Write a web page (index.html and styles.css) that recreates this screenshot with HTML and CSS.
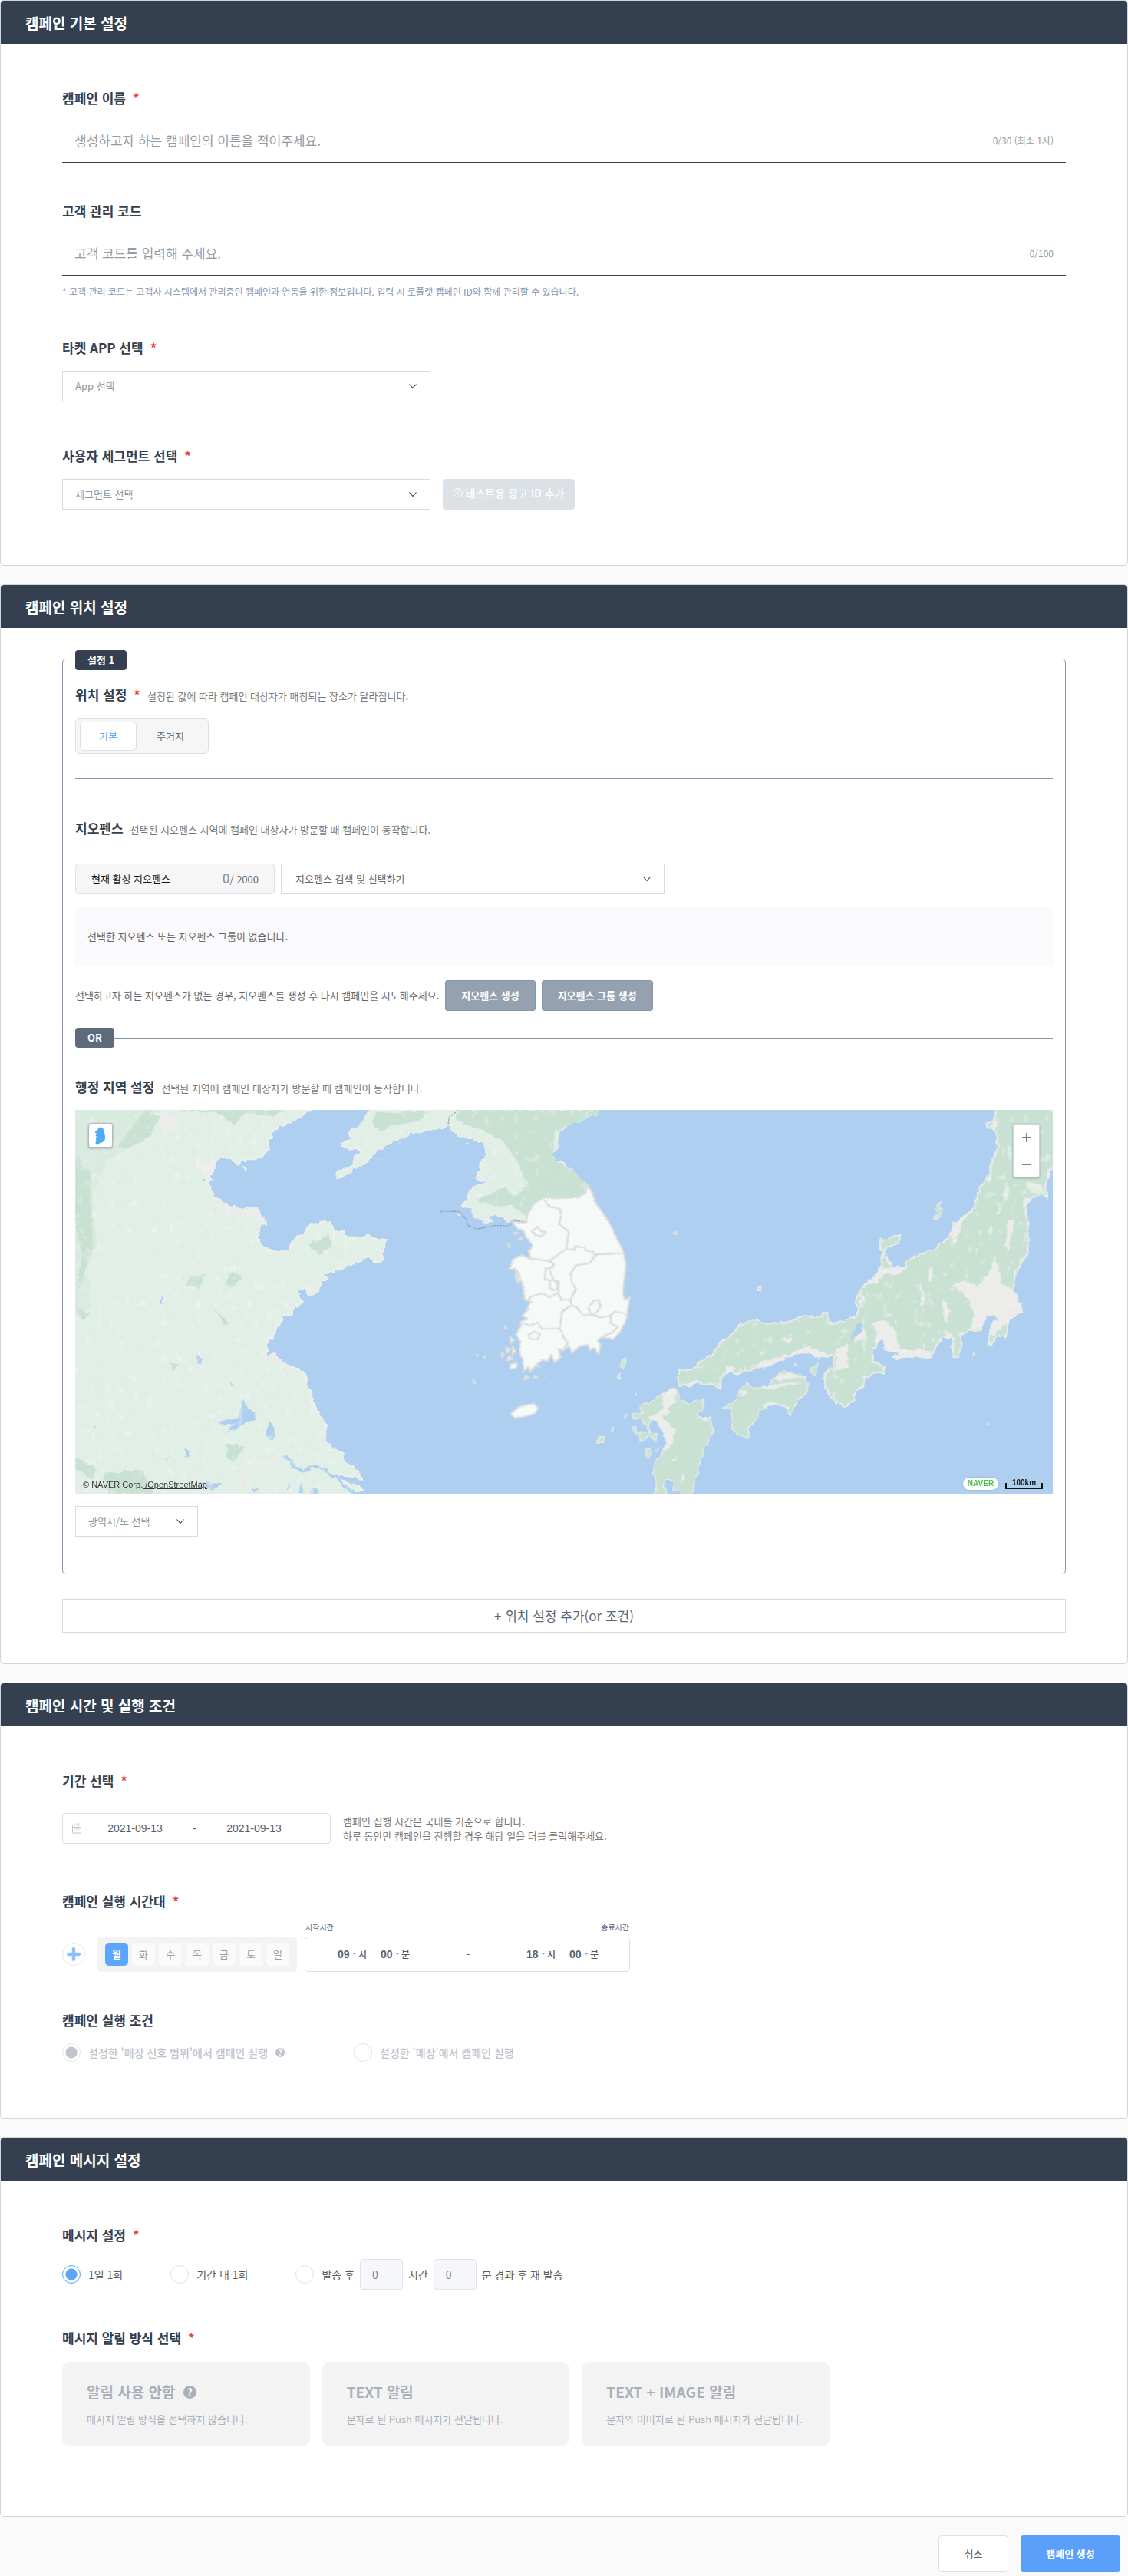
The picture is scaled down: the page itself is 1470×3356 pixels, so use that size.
FILE: index.html
```html
<!DOCTYPE html>
<html lang="ko">
<head>
<meta charset="utf-8">
<meta name="viewport" content="width=device-width, initial-scale=1">
<title>캠페인 생성</title>
<link rel="stylesheet" href="styles.css">
</head>
<body>
<svg class="defs" aria-hidden="true">
  <symbol id="chevron" viewBox="0 0 12 12"><path d="M1.500 3.500 6 8.500l4.500-5" fill="none" stroke="#333" stroke-width="1.100"/></symbol>
</svg>
<form class="page">

  <section class="panel">
    <h2 class="panel-head">캠페인 기본 설정</h2>
    <div class="panel-body basic-body">
      <div class="field">
        <label class="title" for="name">캠페인 이름<span class="star">*</span></label>
        <div class="line-input"><input id="name" type="text" placeholder="생성하고자 하는 캠페인의 이름을 적어주세요."><span class="count">0/30 (최소 1자)</span></div>
      </div>
      <div class="field">
        <label class="title" for="code">고객 관리 코드</label>
        <div class="line-input"><input id="code" type="text" placeholder="고객 코드를 입력해 주세요."><span class="count">0/100</span></div>
        <p class="hint">* 고객 관리 코드는 고객사 시스템에서 관리중인 캠페인과 연동을 위한 정보입니다. 입력 시 로플랫 캠페인 ID와 함께 관리할 수 있습니다.</p>
      </div>
      <div class="field">
        <label class="title" for="app">타켓 APP 선택<span class="star">*</span></label>
        <div class="controls">
          <span class="select select-md"><select id="app"><option>App 선택</option></select><svg class="chev"><use href="#chevron"/></svg></span>
        </div>
      </div>
      <div class="field field-far">
        <label class="title" for="seg">사용자 세그먼트 선택<span class="star">*</span></label>
        <div class="controls">
          <span class="select select-md"><select id="seg"><option>세그먼트 선택</option></select><svg class="chev"><use href="#chevron"/></svg></span>
          <button type="button" class="btn-test" disabled><span class="q-line">?</span>테스트용 광고 ID 추가</button>
        </div>
      </div>
    </div>
  </section>

  <section class="panel">
    <h2 class="panel-head">캠페인 위치 설정</h2>
    <div class="panel-body place-body">
      <div class="rule-box">
        <span class="badge badge-top">설정 1</span>
        <h3 class="title">위치 설정<span class="star">*</span><small>설정된 값에 따라 캠페인 대상자가 매칭되는 장소가 달라집니다.</small></h3>
        <div class="segment">
          <button type="button" class="seg-item seg-on">기본</button>
          <button type="button" class="seg-item">주거지</button>
        </div>
        <hr class="divider">
        <h3 class="title">지오펜스<small>선택된 지오펜스 지역에 캠페인 대상자가 방문할 때 캠페인이 동작합니다.</small></h3>
        <div class="geo-row">
          <div class="geo-count"><span>현재 활성 지오펜스</span><span class="geo-num"><b>0</b>/ 2000</span></div>
          <span class="select select-geo"><select aria-label="지오펜스 검색 및 선택하기"><option>지오펜스 검색 및 선택하기</option></select><svg class="chev"><use href="#chevron"/></svg></span>
        </div>
        <p class="empty">선택한 지오펜스 또는 지오펜스 그룹이 없습니다.</p>
        <div class="make-row">
          <span>선택하고자 하는 지오펜스가 없는 경우, 지오펜스를 생성 후 다시 캠페인을 시도해주세요.</span>
          <button type="button" class="btn-slate">지오펜스 생성</button>
          <button type="button" class="btn-slate">지오펜스 그룹 생성</button>
        </div>
        <div class="or-row"><span class="badge badge-or">OR</span></div>
        <h3 class="title">행정 지역 설정<small>선택된 지역에 캠페인 대상자가 방문할 때 캠페인이 동작합니다.</small></h3>
        <div class="map">
          <svg class="map-art" viewBox="0 0 1274 500" preserveAspectRatio="xMidYMid slice" role="img" aria-label="한국과 주변 지역 지도">
            <defs>
              <filter id="rough" x="-2%" y="-2%" width="104%" height="104%"><feTurbulence type="fractalNoise" baseFrequency="0.13" numOctaves="3" seed="4"/><feDisplacementMap in="SourceGraphic" scale="7" xChannelSelector="R" yChannelSelector="G"/></filter>
              <filter id="speck" x="0" y="0" width="100%" height="100%"><feTurbulence type="fractalNoise" baseFrequency="0.025 0.02" numOctaves="5" seed="8"/><feColorMatrix values="0 0 0 0 0.780  0 0 0 0 0.875  0 0 0 0 0.815  0 0 0 6 -3.400"/></filter>
              <filter id="plain" x="0" y="0" width="100%" height="100%"><feTurbulence type="fractalNoise" baseFrequency="0.05 0.03" numOctaves="4" seed="21"/><feColorMatrix values="0 0 0 0 0.925  0 0 0 0 0.930  0 0 0 0 0.910  0 0 0 8 -5"/></filter>
              <path id="china" d="M20 50H730L715 73 690 90 655 115 620 135 600 160 588 190 592 215 570 245 545 258 515 260 500 277 480 252 455 248 438 262 440 280 425 315 422 345 435 385 460 410 490 425 520 433 557 425 563 450 575 465 588 495 568 490 562 520 562 550 575 575 600 585 640 586 655 560 655 548 695 515 697 497 735 478 757 478 778 515 803 514 806 530 826 538 862 535 870 520 880 540 928 543 918 570 915 600 912 625 895 633 870 612 820 640 790 655 755 670 740 668 757 685 750 698 737 700 733 740 700 757 695 728 675 735 675 750 687 772 660 800 655 820 630 830 620 860 608 875 603 910 588 912 585 963 608 962 630 995 665 1010 692 1032 700 1080 712 1110 715 1140 728 1165 740 1200 752 1220 750 1275 770 1300 803 1325 805 1355 830 1375 850 1395 855 1425 825 1415 790 1405 785 1412 820 1435 850 1445 858 1462 825 1472 800 1500H20Z"/>
              <path id="north" d="M885 50 873 73 862 100 845 125 812 155 818 182 790 192 800 210 830 220 850 222 828 250 830 268 800 290 778 298 780 322 815 308 830 288 862 275 880 245 900 220 935 195 960 180 985 170 990 155 1020 158 1045 143 1075 146 1098 130 1105 145 1125 165 1140 172 1165 180 1200 200 1203 235 1190 265 1185 295 1175 315 1178 325 1205 335 1180 342 1155 365 1150 400 1135 425 1165 430 1165 460 1190 470 1200 490 1225 480 1215 455 1240 460 1265 480 1290 470 1318 482 1325 470 1340 440 1370 400 1465 398 1495 380 1490 330 1475 325 1440 280 1425 262 1400 255 1395 235 1410 210 1412 155 1445 125 1480 112 1520 90 1530 50Z"/>
              <path id="south" d="M1370 393 1400 396 1465 393 1488 375 1492 342 1505 370 1515 410 1540 455 1562 500 1575 540 1592 580 1597 600 1602 640 1597 700 1594 745 1600 765 1613 755 1607 800 1602 840 1587 880 1566 910 1552 905 1540 905 1548 893 1532 903 1522 912 1530 930 1525 965 1512 940 1500 950 1494 930 1470 935 1450 960 1440 935 1425 950 1410 945 1417 975 1400 995 1390 965 1380 990 1365 985 1350 1000 1358 1010 1345 1005 1330 1030 1325 1010 1312 1027 1310 985 1300 960 1302 920 1290 890 1305 860 1303 845 1324 835 1307 824 1325 800 1325 785 1335 775 1315 765 1312 740 1308 700 1290 690 1290 650 1272 655 1280 620 1305 600 1335 620 1325 590 1335 575 1335 560 1320 540 1312 515 1290 500 1280 480 1318 485 1323 455 1340 415Z"/>
              <path id="honshu" d="M1207 50 1205 73 1200 110 1175 125 1185 138 1205 145 1210 180 1208 220 1195 265 1188 310 1165 350 1155 385 1150 425 1120 455 1092 485 1085 520 1065 550 1040 578 1015 590 965 617 955 640 930 645 918 625 905 600 912 578 945 558 950 527 930 532 895 548 890 580 897 600 893 640 878 680 855 705 835 728 823 770 832 800 820 830 790 840 760 850 752 830 752 808 735 812 730 828 685 820 655 838 625 848 580 850 560 835 530 840 507 855 495 880 465 910 430 970 405 980 385 1015 345 1020 338 1050 345 1080 375 1085 385 1070 425 1072 458 1095 462 1050 480 1025 500 1040 545 1020 590 1010 620 990 650 970 685 960 730 978 765 970 765 1000 740 1035 740 1090 765 1130 770 1145 800 1155 820 1140 830 1100 848 1080 850 1050 880 1035 905 1035 907 1010 875 985 875 950 890 918 903 915 905 950 925 955 945 960 925 980 990 975 1030 980 1045 940 1065 905 1090 905 1088 950 1090 980 1105 975 1118 935 1115 900 1135 878 1168 878 1175 850 1185 825 1205 820 1210 835 1195 860 1188 890 1185 930 1195 932 1210 905 1238 900 1242 850 1265 820 1285 810 1270 770 1258 730 1265 670 1280 625 1295 600 1300 550 1298 490 1290 430 1305 395 1335 380 1350 398 1345 340 1362 285 1400 260V50Z"/>
              <path id="isles" d="M325 1088 345 1095 350 1130 370 1145 395 1130 412 1130 412 1165 395 1190 430 1195 440 1245 425 1285 410 1310 400 1380 390 1420 380 1500H350L348 1462 330 1465 328 1425 308 1425 305 1445 320 1500H268L285 1430 272 1400 275 1370 300 1320 310 1285 300 1240 275 1205 265 1225 270 1250 285 1255 280 1285 265 1262 240 1285 235 1252 262 1245 240 1205 215 1200 215 1175 240 1180 240 1150 265 1140 300 1105ZM600 1050 630 1025 660 1030 690 1045 697 1100 665 1140 648 1190 625 1150 600 1148 565 1170 560 1200 535 1235 537 1270 505 1262 488 1235 485 1160 455 1168 500 1130 510 1095 530 1065 545 1085 590 1080ZM727 988 718 1040 698 1035 705 1015ZM1058 400 1056 430 1065 440 1048 475 1038 470 1050 445 1038 435ZM202 973 195 1020 184 1015 188 985ZM186 1030 182 1060 174 1050ZM228 1100 226 1118 220 1112ZM205 1177 200 1198 194 1195ZM230 1222 232 1258 220 1250 218 1228ZM270 1300 268 1335 256 1348 253 1310ZM292 1305 285 1318 275 1318ZM142 1265 140 1288 120 1287 128 1268ZM168 1230 165 1248 156 1240ZM230 1418 224 1432 220 1430ZM572 718 570 738 556 735 560 716ZM1148 955 1151 968 1143 968ZM664 995 664 1007 652 1005ZM1188 1212 1190 1222 1180 1218ZM1158 1062 1160 1070 1154 1068Z"/>
              <clipPath id="c-china"><use href="#china"/></clipPath>
              <clipPath id="c-north"><use href="#north"/></clipPath>
              <clipPath id="c-honshu"><use href="#honshu"/></clipPath>
              <clipPath id="c-isles"><use href="#isles"/></clipPath>
            </defs>
            <rect width="1274" height="500" fill="#aecfef"/>
            <g filter="url(#rough)">
              <g transform="translate(-18 -26) scale(.4592 .3571)">
                <g clip-path="url(#c-china)">
                  <use href="#china" fill="#e1efe6" stroke="#efefec" stroke-width="10"/>
                  <path fill="#d9eadf" d="M20 50H300L240 170 130 260 90 380 100 560 75 650 80 800 20 830Z"/>
                  <path fill="#c9e1d3" d="M240 75 285 95 250 170 185 215 160 205 210 120ZM330 73H640L600 95 520 85 490 130 450 85ZM40 240 80 300 90 560 60 700 40 740 60 600 40 500ZM40 785 80 820 60 845ZM40 1340 100 1385 85 1420 40 1380ZM120 1400 230 1385 260 1472H130ZM370 680 410 670 390 720 355 715ZM485 665 515 680 480 725 465 700ZM470 1290 520 1300 490 1360 465 1340ZM700 560 760 530 770 570 730 600ZM435 800 475 850 460 855ZM310 995 330 1000 320 1025Z"/>
                  <path fill="#ececea" d="M275 85 320 95 345 130 310 165 280 120ZM370 250 430 265 440 310 425 360 405 300 370 270ZM430 385 480 425 557 425 585 495 550 470 480 455 440 420ZM560 570 590 588 645 588 630 602 580 598ZM100 425 130 440 110 455ZM352 655 385 650 372 672ZM705 715 725 722 730 745 705 750ZM485 895 505 912 490 935ZM585 965 610 962 650 1000 695 1030 660 1020 610 1000ZM530 1350 590 1345 640 1350 600 1362 545 1370 520 1420 510 1472 500 1420Z"/>
                  <g fill="none" stroke="#ebedea" stroke-width="5"><path d="M45 942 100 936 145 942 165 895 210 835 290 770 350 650 455 560M330 890 390 985 400 1060 480 1100"/></g>
                </g>
                <g fill="#aecfef"><path d="M285 750 292 780 280 778ZM382 960 402 985 390 1003ZM478 1062 490 1068 485 1075ZM516 1132 530 1160 550 1175 550 1200 520 1215 490 1240 470 1245 495 1215 445 1222 460 1203 500 1200ZM592 1200 605 1235 605 1270 590 1275 580 1245ZM350 1305 362 1325 355 1345ZM308 1325 300 1352 298 1340ZM90 1220 98 1232 93 1237ZM395 1430 460 1437 425 1462 400 1450ZM540 1450 560 1455 548 1472ZM645 1425 650 1445 640 1460ZM680 1435 690 1472 672 1465ZM718 1450 735 1472H705ZM402 322 410 328 402 335Z"/></g>
                <path d="M632 1335 650 1350 660 1380 690 1390 715 1374 745 1382 765 1405 785 1412 800 1440 830 1472" fill="none" stroke="#aecfef" stroke-width="9"/>
                <g clip-path="url(#c-north)">
                  <use href="#north" fill="#e1efe6" stroke="#efefec" stroke-width="8"/>
                  <path fill="#c9e1d2" d="M1125 73H1530L1520 90 1400 150 1395 250 1495 330V395L1370 400 1320 460 1280 420 1220 425 1180 400 1250 360 1310 330 1300 270 1250 180 1180 140 1120 110ZM890 80 960 85 1040 75 1020 110 940 130 900 150 880 120Z"/>
                  <path fill="#dfeee5" d="M1200 200 1250 250 1290 290 1240 350 1205 335 1220 280ZM1412 155 1440 150 1420 190 1395 230ZM1240 300 1330 330 1290 390 1260 360Z"/>
                </g>
                <path d="M519 278 525 286 519 294ZM1127 448 1132 455 1124 457ZM1150 190 1153 198 1147 196ZM962 195 965 200 960 200ZM898 253 901 258 896 259Z" fill="#f1f5f2"/>
              </g>
              <g transform="translate(622 -26) scale(.4783 .3571)">
                <g clip-path="url(#c-honshu)">
                  <use href="#honshu" fill="#c8e1d2" stroke="#ececea" stroke-width="10"/>
                  <path fill="#ececea" d="M1090 710 1120 700 1160 715 1190 670 1205 600 1215 650 1225 710 1262 730 1285 810 1245 840 1200 900 1180 860 1135 880 1150 820 1130 760ZM875 845 905 840 935 880 945 945 1030 950 1030 980 925 980 905 915 870 960 885 890ZM925 650 965 640 940 675 905 670 885 700 840 725 890 650ZM1110 460 1150 430 1120 480 1095 560 1085 520ZM1290 385 1310 400 1290 440 1280 420ZM1240 480 1260 470 1240 600 1235 560ZM765 960 805 925 805 1010 760 1030 780 980ZM640 965 690 935 765 970 700 975 640 985 570 1015 540 1005ZM1000 690 1015 760 1005 830 1005 760ZM1030 640 1040 660 1030 700 1055 745 1040 720 1022 690ZM1060 760 1085 810 1068 840ZM845 850 855 900 820 925 830 890ZM840 728 850 760 835 800ZM470 1010 500 1010 480 1040ZM350 1075 390 1060 440 1075 385 1085ZM625 910 650 905 645 925ZM1065 880 1095 895 1075 905ZM1200 90 1210 150 1200 140Z"/>
                  <path fill="#e0efe6" d="M1235 330 1245 370 1235 410 1228 380ZM1190 280 1200 310 1188 345 1180 320ZM1215 410 1222 440 1210 460ZM1190 485 1198 510 1190 540ZM1240 190 1250 210 1248 260 1240 230ZM1290 335 1330 340 1340 380 1300 370Z"/>
                </g>
                <path fill="#aecfef" d="M835 850 848 855 840 885 820 900 812 925 815 895Z"/>
                <g clip-path="url(#c-isles)">
                  <use href="#isles" fill="#c8e1d2" stroke="#ececea" stroke-width="6"/>
                  <path fill="#ececea" d="M300 1100 340 1090 335 1140 310 1160 325 1180 300 1190 335 1240 325 1290 305 1320 300 1240 260 1195 300 1165ZM600 1050 640 1030 690 1050 620 1060ZM570 1150 600 1138 650 1160 580 1165ZM625 1070 690 1068 600 1090 545 1095ZM320 1350 345 1335 330 1355ZM355 1400 365 1420 348 1430ZM510 1090 530 1100 515 1120ZM395 1190 430 1195 415 1210Z"/>
                </g>
              </g>
            </g>
            <g transform="translate(-18 -26) scale(.4592 .3571)">
              <g clip-path="url(#c-china)"><rect x="30" y="60" width="930" height="1420" filter="url(#speck)" opacity=".35"/><rect x="30" y="60" width="930" height="1420" filter="url(#plain)" opacity=".4"/></g>
              <g clip-path="url(#c-north)"><rect x="780" y="60" width="760" height="440" filter="url(#plain)" opacity=".3"/></g>
            </g>
            <g transform="translate(622 -26) scale(.4783 .3571)">
              <g clip-path="url(#c-honshu)"><rect x="330" y="60" width="1040" height="1100" filter="url(#plain)" opacity=".4"/></g>
            </g>
            <g transform="translate(-18 -26) scale(.4592 .3571)">
              <path d="M1075 443H1130L1145 465 1155 495 1178 508 1230 495H1272L1285 475 1318 483" fill="none" stroke="#7f93ab" stroke-width="3" stroke-dasharray="5 3"/>
              <path d="M1127 60 1120 80 1100 100 1098 125" fill="none" stroke="#a7a9a9" stroke-width="3" stroke-dasharray="8 3"/>
              <g filter="url(#rough)" fill="#f5f9f7" stroke="#dcdedd" stroke-width="5" stroke-linejoin="round">
                <use href="#south"/>
                <path d="M1275 1180 1300 1155 1340 1143 1353 1160 1345 1180 1310 1193 1285 1197ZM1275 1000 1295 995 1290 1015 1272 1018ZM1272 900 1285 910 1275 925ZM1262 940 1275 945 1265 960ZM1280 935 1290 955 1280 965ZM1250 955 1258 965 1252 975ZM1270 970 1282 980 1265 988ZM1318 1040 1325 1050 1312 1058ZM1343 1040 1350 1048 1342 1052ZM1170 1055 1175 1070 1169 1070ZM1260 862 1263 870 1257 868ZM1198 968 1205 975 1199 980ZM1180 965 1183 970 1179 970ZM1270 560 1274 572 1269 577ZM1303 535 1310 545 1300 545ZM1296 520 1288 530 1284 520ZM1735 522 1745 517 1745 528ZM1387 1070H1390M1295 660 1303 690 1296 705Z"/>
                <g fill="none" stroke-width="6"><path d="M1370 400 1385 425 1415 435 1418 460 1412 490 1440 515 1437 545 1432 580 1410 600 1385 625 1340 615M1432 580 1455 583 1458 570 1485 575 1490 587 1510 590 1515 600 1592 595M1515 600 1500 632 1460 640 1445 670 1448 700 1460 725 1445 765 1415 765M1385 625 1398 635 1390 650 1375 650 1372 690 1388 695 1385 720 1395 730 1408 728 1407 705 1397 695 1385 655M1325 770 1330 755 1365 742 1385 755 1410 742 1412 700 1398 695M1410 742 1420 765 1445 765 1448 785 1420 810 1415 870 1365 872 1350 848 1330 860 1310 850M1448 785 1465 795 1478 820 1510 822 1530 830 1560 822 1570 808 1600 815M1415 870 1425 900 1437 925 1425 945M1560 822 1558 850 1580 865 1562 885 1540 895M1495 795 1510 770 1525 765 1530 790 1512 822 1500 810ZM1325 895 1340 880 1358 890 1352 910 1330 908ZM1335 515 1352 498 1360 515 1375 518 1362 535 1345 528Z"/></g>
              </g>
            </g>
          </svg>
          <button type="button" class="map-reset" aria-label="대한민국 전체 보기"><svg viewBox="0 0 32 32"><path d="M13 6.500 15 5h3l1.500 1.200 1 4 1.500 4.500.500 5-1 4-3.500 2.300-3 .700-2.500 2.500-3-.500-.500-2.500 1-3-.500-2.500 1-3-1.500-1.200 1-1.500.200-2-2-.500.800-2 1.800-.500Z" fill="#4dabf7"/></svg></button>
          <div class="map-zoom">
            <button type="button" aria-label="확대"><svg viewBox="0 0 14 14"><path d="M7 1v12M1 7h12" stroke="#555" stroke-width="1.500"/></svg></button>
            <button type="button" aria-label="축소"><svg viewBox="0 0 14 14"><path d="M1 7h12" stroke="#555" stroke-width="1.500"/></svg></button>
          </div>
          <div class="map-copy">© NAVER Corp.<a href="#"> /OpenStreetMap</a></div>
          <div class="map-brand"><span class="naver">NAVER</span><span class="scale">100km</span></div>
        </div>
        <span class="select select-sm"><select aria-label="광역시/도 선택"><option>광역시/도 선택</option></select><svg class="chev"><use href="#chevron"/></svg></span>
      </div>
      <button type="button" class="btn-add">+ 위치 설정 추가(or 조건)</button>
    </div>
  </section>

  <section class="panel">
    <h2 class="panel-head">캠페인 시간 및 실행 조건</h2>
    <div class="panel-body time-body">
      <h3 class="title">기간 선택<span class="star">*</span></h3>
      <div class="date-row">
        <div class="date-box">
          <svg class="cal" viewBox="0 0 14 14" fill="none" stroke="#c0c4cc"><path d="M1.500 2.500h11v10.500h-11ZM1.500 5.500h11M4 .500v3M7 .500v3M10 .500v3M3.500 8h1.500M6.200 8h1.500M9 8h1.500M3.500 10.500h1.500M6.200 10.500h1.500M9 10.500h1.500"/></svg>
          <input type="text" value="2021-09-13" aria-label="시작일"><span class="date-sep">-</span><input type="text" value="2021-09-13" aria-label="종료일">
        </div>
        <p class="date-note">캠페인 집행 시간은 국내를 기준으로 합니다.<br>하루 동안만 캠페인을 진행할 경우 해당 일을 더블 클릭해주세요.</p>
      </div>

      <h3 class="title title-hours">캠페인 실행 시간대<span class="star">*</span></h3>
      <div class="hours-row">
        <button type="button" class="plus" aria-label="시간대 추가"><svg viewBox="0 0 16 16"><path d="M8 2v12M2 8h12" stroke="#8cc0fb" stroke-width="4" stroke-linecap="round"/></svg></button>
        <div class="days">
          <button type="button" class="day day-on">월</button><button type="button" class="day">화</button><button type="button" class="day">수</button><button type="button" class="day">목</button><button type="button" class="day">금</button><button type="button" class="day">토</button><button type="button" class="day">일</button>
        </div>
        <div class="clock">
          <div class="clock-caps"><span>시작시간</span><span>종료시간</span></div>
          <div class="clock-box">
            <div class="clock-set">
              <label><select><option>09</option></select><i class="caret"></i>시</label>
              <label><select><option>00</option></select><i class="caret"></i>분</label>
            </div>
            <span>-</span>
            <div class="clock-set">
              <label><select><option>18</option></select><i class="caret"></i>시</label>
              <label><select><option>00</option></select><i class="caret"></i>분</label>
            </div>
          </div>
        </div>
      </div>

      <h3 class="title title-next">캠페인 실행 조건</h3>
      <div class="cond-row">
        <label class="radio radio-off"><input type="radio" name="cond" checked disabled>설정한 '매장 신호 범위'에서 캠페인 실행<span class="q">?</span></label>
        <label class="radio radio-off"><input type="radio" name="cond" disabled>설정한 '매장'에서 캠페인 실행</label>
      </div>
    </div>
  </section>

  <section class="panel">
    <h2 class="panel-head">캠페인 메시지 설정</h2>
    <div class="panel-body msg-body">
      <h3 class="title">메시지 설정<span class="star">*</span></h3>
      <div class="freq-row">
        <label class="radio"><input type="radio" name="freq" checked>1일 1회</label>
        <label class="radio"><input type="radio" name="freq">기간 내 1회</label>
        <div class="again">
          <label class="radio"><input type="radio" name="freq">발송 후</label>
          <input class="num" type="text" value="0" aria-label="시간"><span>시간</span>
          <input class="num" type="text" value="0" aria-label="분"><span>분 경과 후 재 발송</span>
        </div>
      </div>
      <h3 class="title title-next">메시지 알림 방식 선택<span class="star">*</span></h3>
      <div class="cards">
        <button type="button" class="card" disabled><strong>알림 사용 안함<span class="q q-lg">?</span></strong><span>메시지 알림 방식을 선택하지 않습니다.</span></button>
        <button type="button" class="card" disabled><strong>TEXT 알림</strong><span>문자로 된 Push 메시지가 전달됩니다.</span></button>
        <button type="button" class="card" disabled><strong>TEXT + IMAGE 알림</strong><span>문자와 이미지로 된 Push 메시지가 전달됩니다.</span></button>
      </div>
    </div>
  </section>

  <div class="actions">
    <button type="button" class="btn-cancel">취소</button>
    <button type="submit" class="btn-primary">캠페인 생성</button>
  </div>
</form>
</body>
</html>
```
FILE: styles.css
```css
* { box-sizing: border-box; }

body {
  margin: 0;
  background: #fafafa;
  color: #343f50;
  font-family: "Noto Sans CJK KR", "Noto Sans", sans-serif;
  font-size: 13px;
  line-height: 20px;
}

button, input, select {
  margin: 0;
  color: inherit;
  font: inherit;
}
button { padding: 0; border: 0; cursor: pointer; }
h2, h3, p { margin: 0; }
.defs { display: none; }

/* panels */
.page { padding-bottom: 6px; }
.panel {
  background: #fff;
  border: 1px solid #d3d6d9;
  border-radius: 5px;
  overflow: hidden;
}
.panel + .panel { margin-top: 24px; }
.panel-head {
  height: 56px;
  padding: 0 32px;
  background: #343f50;
  color: #fff;
  font-size: 19px;
  font-weight: 700;
  line-height: 58px;
}
.panel-body { padding: 58px 80px 72px; }
.place-body { padding: 40px 80px; }
.time-body { padding-bottom: 73px; }
.msg-body { padding-bottom: 91px; }

.title {
  display: block;
  height: 26px;
  font-size: 17px;
  font-weight: 700;
  line-height: 25px;
}
.star { margin-left: 9px; color: #f03e3e; }
.title small {
  margin-left: 9px;
  color: #777;
  font-size: 13px;
  font-weight: 400;
}
.title-hours { margin-top: 62px; }
.title-next { margin-top: 50px; }

/* basic settings */
.field + .field { margin-top: 50px; }
.field + .field-far { margin-top: 58px; }
.line-input {
  display: flex;
  align-items: center;
  height: 58px;
  margin-top: 13px;
  padding: 0 16px;
  border-bottom: 1px solid #343f50;
}
.line-input input {
  flex: 1;
  padding: 0;
  border: 0;
  outline: 0;
  background: none;
  font-size: 17px;
}
.line-input input::placeholder { color: #959ba2; opacity: 1; }
.count { color: #959ba2; font-size: 12px; }
.hint { margin-top: 11px; color: #8496af; font-size: 12px; }
.controls { display: flex; gap: 16px; margin-top: 17px; }

.select { position: relative; display: block; height: 40px; }
.select select {
  width: 100%;
  height: 40px;
  padding: 0 40px 0 16px;
  border: 1px solid #d9dbe3;
  border-radius: 0;
  background: #fff;
  color: #8f959c;
  appearance: none;
}
.chev {
  position: absolute;
  right: 17px;
  top: 14px;
  width: 12px;
  height: 12px;
  pointer-events: none;
}
.select-md { width: 480px; }
.select-sm { width: 160px; margin-top: 16px; }
.select-geo { width: 500px; }
.select-geo select { padding-left: 18px; color: #666; }

.btn-test {
  display: flex;
  align-items: center;
  justify-content: center;
  gap: 4px;
  width: 172px;
  height: 40px;
  padding-bottom: 4px;
  border-radius: 4px;
  background: #dce1e5;
  color: #fff;
  font-size: 14px;
  font-weight: 500;
}
.q-line {
  width: 12px;
  height: 12px;
  border: 1px solid #fff;
  border-radius: 50%;
  font-size: 9px;
  font-weight: 400;
  line-height: 10px;
}

/* location settings */
.rule-box {
  position: relative;
  padding: 33px 16px 48px;
  border: 1px solid #8496ae;
  border-radius: 5px;
}
.badge {
  padding: 0 16px;
  border-radius: 4px;
  color: #fff;
  font-weight: 700;
  line-height: 26px;
}
.badge-top { position: absolute; left: 16px; top: -12px; background: #343f50; }
.badge-or { background: #5f6b7c; }
.segment {
  display: flex;
  width: 174px;
  height: 46px;
  margin-top: 18px;
  padding: 3px 5px;
  border: 1px solid #dcdfe3;
  border-radius: 5px;
  background: #f6f6f6;
}
.seg-item {
  width: 88px;
  height: 38px;
  border: 1px solid transparent;
  border-radius: 5px;
  background: none;
  color: #5a6779;
}
.seg-on { width: 74px; border-color: #dcdfe3; background: #fff; color: #55a4fa; }
.divider { height: 1px; margin: 32px 0 51px; border: 0; background: #8496ae; }
.geo-row { display: flex; gap: 8px; margin-top: 33px; }
.geo-count {
  display: flex;
  align-items: center;
  justify-content: space-between;
  width: 260px;
  height: 40px;
  padding: 0 20px;
  border: 1px solid #dfe2e8;
  border-radius: 4px;
  background: #f6f6f6;
  color: #111;
}
.geo-num { color: #5f6b7c; }
.geo-num b { color: #8496ae; font-size: 17px; font-weight: 500; }
.empty {
  margin-top: 16px;
  padding: 29px 16px;
  background: #fafafc;
  color: #666;
}
.make-row {
  display: flex;
  align-items: center;
  gap: 8px;
  margin-top: 18px;
  color: #666;
}
.btn-slate {
  height: 40px;
  padding: 0 20px;
  border: 1px solid #8496ae;
  border-radius: 3px;
  background: #95a1af;
  color: #fff;
  font-weight: 700;
}
.or-row { display: flex; align-items: center; margin: 22px 0 38px; }
.or-row::after { content: ""; flex: 1; height: 1px; background: #8496a4; }
.btn-add {
  display: block;
  width: 100%;
  height: 44px;
  margin-top: 32px;
  border: 1px solid #d9dbe3;
  background: #fff;
  color: #5a6779;
  font-size: 17px;
}

/* map and what floats over it */
.map {
  position: relative;
  height: 500px;
  margin-top: 17px;
  overflow: hidden;
  background: #aecfef;
  font-family: "Liberation Sans", Arial, sans-serif;
}
.map-art { display: block; width: 100%; height: 100%; }
.map-reset {
  position: absolute;
  left: 17px;
  top: 17px;
  width: 32px;
  height: 32px;
  border: 1px solid #b5b9bc;
  border-radius: 3px;
  background: #fff;
  box-shadow: 0 1px 3px rgba(0, 0, 0, .3);
}
.map-reset svg { display: block; width: 30px; height: 30px; }
.map-zoom {
  position: absolute;
  right: 17px;
  top: 18px;
  width: 35px;
  border: 1px solid #d0d3d8;
  border-radius: 3px;
  background: #fff;
  box-shadow: 0 1px 3px rgba(0, 0, 0, .25);
}
.map-zoom button {
  display: flex;
  align-items: center;
  justify-content: center;
  width: 100%;
  height: 34px;
  background: none;
}
.map-zoom button + button { border-top: 1px solid #d0d3d8; }
.map-zoom svg { width: 14px; height: 14px; }
.map-copy {
  position: absolute;
  left: 10px;
  bottom: 5px;
  color: #333;
  font-size: 11px;
  line-height: 14px;
  white-space: pre;
}
.map-copy a { color: inherit; text-decoration: underline; }
.map-brand {
  position: absolute;
  right: 13px;
  bottom: 5px;
  display: flex;
  align-items: center;
  gap: 9px;
  font-weight: 700;
}
.naver {
  width: 46px;
  border-radius: 8px;
  background: #fff;
  box-shadow: 0 0 1px 1px rgba(0, 0, 0, .08);
  color: #4cc04c;
  font-size: 10px;
  line-height: 16px;
  text-align: center;
}
.scale {
  position: relative;
  width: 49px;
  height: 14px;
  color: #111;
  font-size: 10px;
  line-height: 12px;
  text-align: center;
}
.scale::after {
  content: "";
  position: absolute;
  inset: 6px 0 0;
  border: 2px solid #111;
  border-top: 0;
}

/* schedule */
.date-row { display: flex; align-items: center; gap: 16px; margin-top: 29px; }
.date-box {
  display: flex;
  align-items: center;
  width: 350px;
  height: 40px;
  padding-left: 11px;
  border: 1px solid #dcdfe3;
  border-radius: 4px;
  color: #5b5e64;
  font-family: "Liberation Sans", Arial, sans-serif;
  font-size: 14px;
}
.cal { width: 14px; height: 14px; margin-right: 14px; }
.date-box input {
  width: 110px;
  padding: 0;
  border: 0;
  background: none;
  text-align: center;
}
.date-sep { width: 45px; text-align: center; }
.date-note { color: #777; line-height: 19px; }

.hours-row { display: flex; align-items: flex-end; margin-top: 14px; }
.plus {
  display: flex;
  align-items: center;
  justify-content: center;
  width: 30px;
  height: 30px;
  margin: 0 16px 8px 0;
  border: 1px solid #e5e7ec;
  border-radius: 50%;
  background: #fff;
}
.plus svg { width: 18px; height: 18px; }
.days {
  display: flex;
  gap: 5px;
  width: 260px;
  margin-right: 10px;
  padding: 8px 10px;
  border-radius: 5px;
  background: #f3f3f3;
}
.day {
  width: 30px;
  height: 30px;
  border-radius: 5px;
  background: #fafafa;
  color: #9a9fa6;
}
.day-on { background: #5ba5fa; color: #fff; font-weight: 700; }
.clock { width: 424px; }
.clock-caps {
  display: flex;
  justify-content: space-between;
  padding: 0 1px;
  color: #5a6779;
  font-size: 10px;
  line-height: 14px;
}
.clock-box {
  display: flex;
  align-items: center;
  justify-content: space-between;
  height: 46px;
  margin-top: 5px;
  padding: 0 40px 0 42px;
  border: 1px solid #dcdfe3;
  border-radius: 5px;
  color: #4c5665;
}
.clock-set { display: flex; gap: 18px; font-size: 12px; font-weight: 500; }
.clock-set label { display: flex; align-items: center; }
.clock-set select {
  width: 16px;
  padding: 0;
  border: 0;
  background: none;
  color: #606266;
  font-family: "Liberation Sans", Arial, sans-serif;
  font-size: 14px;
  font-weight: 700;
  appearance: none;
}
.caret {
  margin: 0 3px 0 4px;
  border: 2px solid transparent;
  border-top-color: #7fa9d8;
  border-bottom: 0;
}

.radio {
  display: flex;
  align-items: center;
  gap: 10px;
  color: #5a5e64;
  font-size: 14px;
  line-height: 24px;
}
.radio input {
  width: 24px;
  height: 24px;
  border: 1px solid #dfe2e8;
  border-radius: 50%;
  background: #fff;
  appearance: none;
}
.radio input:checked {
  border-color: #5ba5fa;
  background: radial-gradient(circle, #5ba5fa 7px, #fff 8px);
}
.radio-off { color: #bfc2ca; font-weight: 500; }
.radio-off input:checked {
  border-color: #e2e4ea;
  background: radial-gradient(circle, #c0c4cc 7px, #fff 8px);
}
.cond-row { display: flex; margin-top: 17px; }
.cond-row .radio:first-child { width: 380px; }
.q {
  width: 12px;
  height: 12px;
  border-radius: 50%;
  background: #bfc2ca;
  color: #fff;
  font-size: 10px;
  font-weight: 700;
  line-height: 12px;
  text-align: center;
}

/* messages */
.freq-row { display: flex; align-items: center; gap: 62px; margin-top: 18px; }
.again {
  display: flex;
  align-items: center;
  gap: 7px;
  color: #5a5e64;
  font-size: 14px;
}
.num {
  width: 56px;
  height: 40px;
  padding: 0 15px;
  border: 1px solid #e0e3e9;
  border-radius: 4px;
  background: #f5f7fb;
  color: #7b8088;
}
.cards {
  display: grid;
  grid-template-columns: repeat(3, 1fr);
  gap: 16px;
  max-width: 1000px;
  margin-top: 18px;
}
.card {
  display: flex;
  flex-direction: column;
  gap: 12px;
  height: 110px;
  padding: 25px 32px 0;
  border-radius: 10px;
  background: #f3f3f3;
  color: #a8b0b9;
  text-align: left;
}
.card strong {
  display: flex;
  align-items: center;
  gap: 10px;
  font-size: 19px;
  line-height: 28px;
}
.q-lg {
  width: 17px;
  height: 17px;
  background: #a8b0b9;
  font-size: 14px;
  line-height: 17px;
}

.actions {
  display: flex;
  justify-content: flex-end;
  gap: 16px;
  margin-top: 24px;
  padding-right: 10px;
}
.btn-cancel {
  width: 91px;
  height: 48px;
  border: 1px solid #dcdfe3;
  border-radius: 4px;
  background: #fff;
  color: #606266;
  font-weight: 500;
}
.btn-primary {
  width: 130px;
  height: 48px;
  border-radius: 4px;
  background: #5a9ffa;
  color: #fff;
  font-weight: 700;
}
```
